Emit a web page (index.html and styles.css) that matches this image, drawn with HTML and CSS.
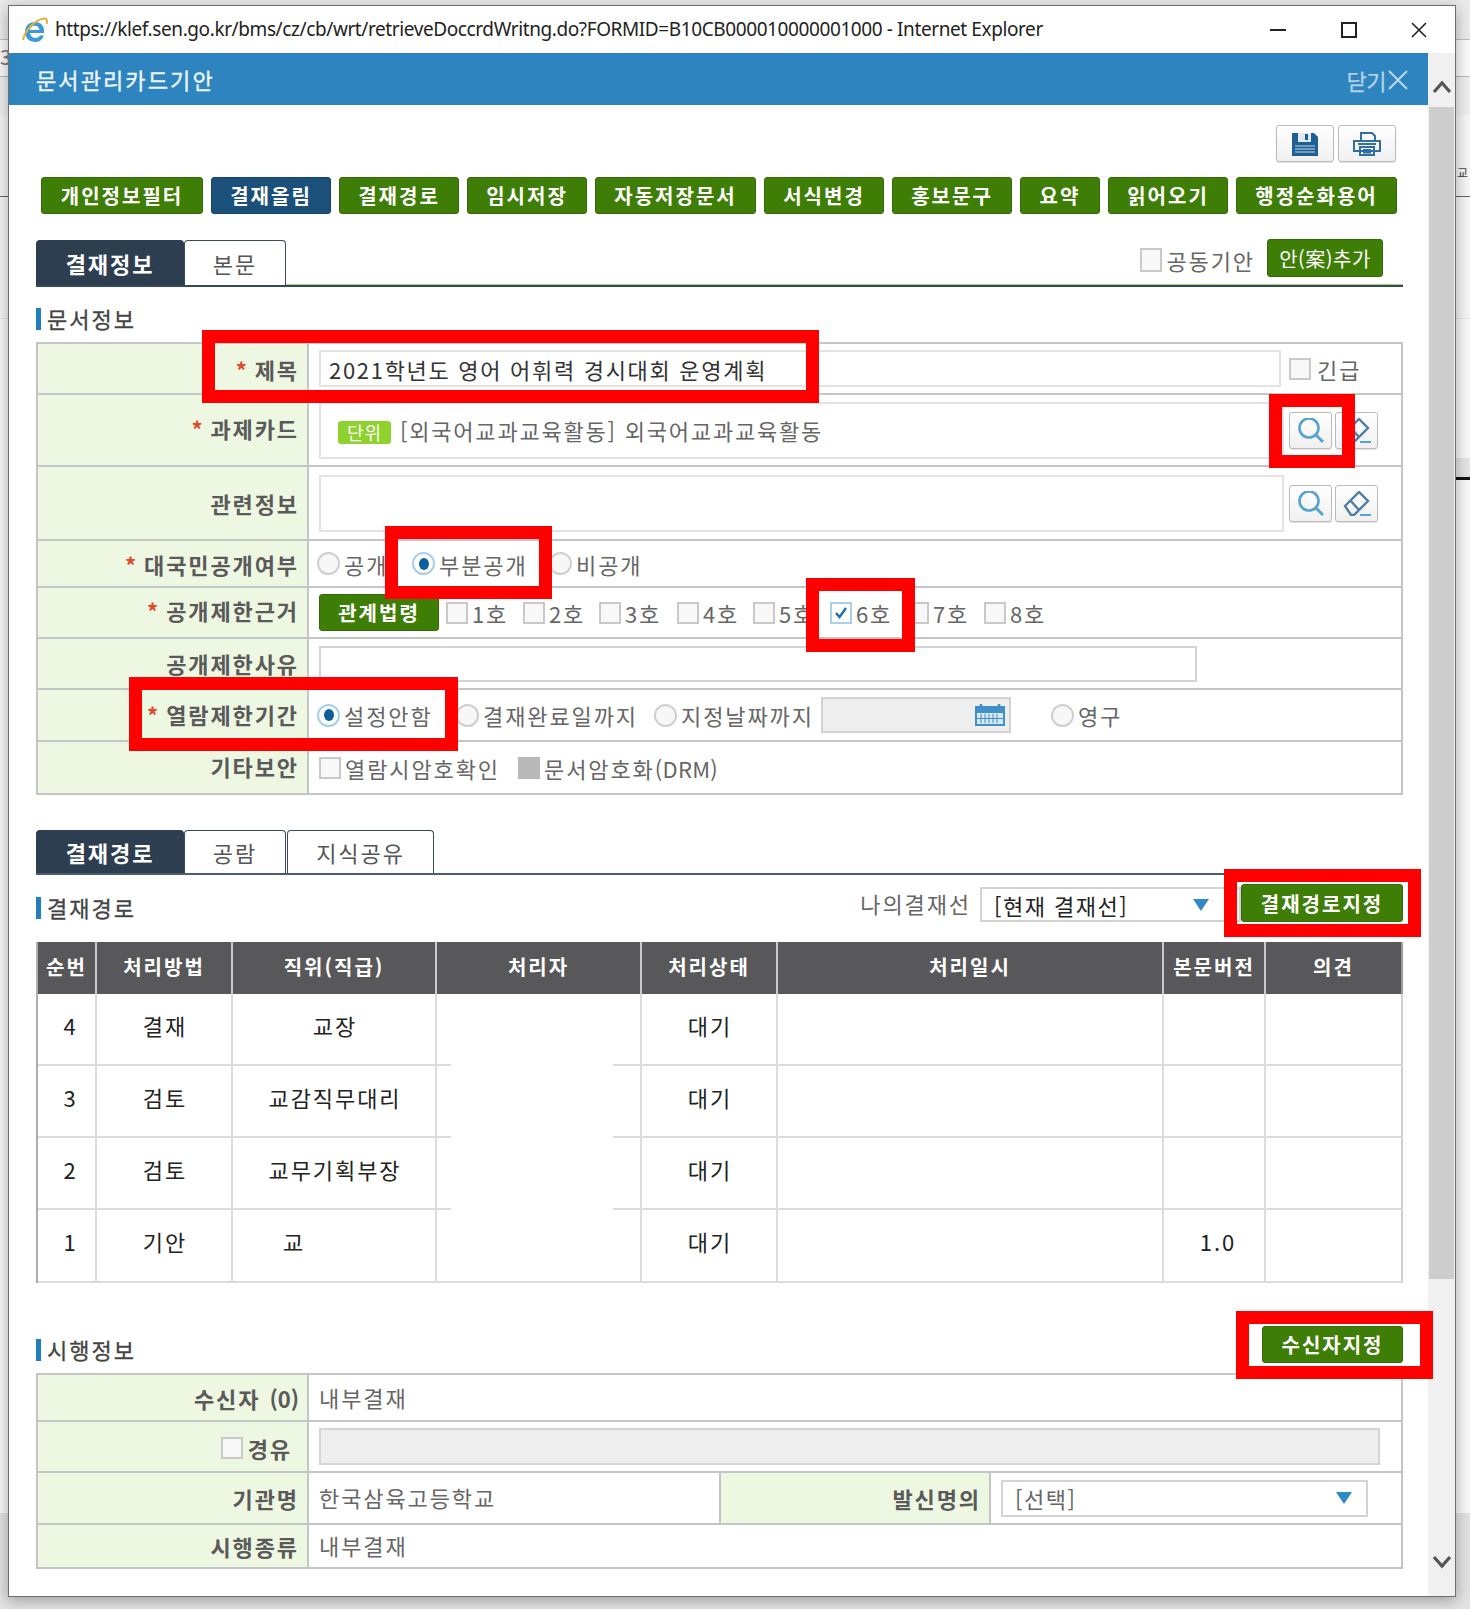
FILE: index.html
```html
<!DOCTYPE html>
<html lang="ko">
<head>
<meta charset="utf-8">
<title>문서관리카드기안</title>
<link rel="stylesheet" href="styles.css">
</head>
<body>
<div class="desktop">
  <span class="behind b-left">3</span>
  <span class="behind b-right">교</span>
  <div class="behind b-band"></div>
  <div class="window">
    <div class="titlebar">
      <svg class="ie" viewBox="0 0 26 26"><path d="M3 15c0-6 4-10 10-10s9 4 9 9v2H8c.5 3 2.500 5 5.500 5 2 0 3.500-1 4.300-2.500h4C20.500 22.500 17.500 25 13.500 25 7.500 25 3 21 3 15zm5-2h9.500c-.3-2.500-2-4.200-4.700-4.200S8.400 10.500 8 13z" fill="#3d9ad9"/><path d="M1 23C3 13 13 3 22 1.500c3-.5 3.500 2 2.500 5.500" fill="none" stroke="#e3b23c" stroke-width="2"/></svg>
      <span class="wintitle">https://klef.sen.go.kr/bms/cz/cb/wrt/retrieveDoccrdWritng.do?FORMID=B10CB000010000001000 - Internet Explorer</span>
      <div class="winctl">
        <svg viewBox="0 0 16 16"><path d="M0 8h16" stroke="#222" stroke-width="2"/></svg>
        <svg viewBox="0 0 16 16"><rect x="1" y="1" width="14" height="14" fill="none" stroke="#222" stroke-width="2"/></svg>
        <svg viewBox="0 0 16 16"><path d="M1 1l14 14M15 1L1 15" stroke="#222" stroke-width="1.600"/></svg>
      </div>
    </div>
    <div class="pane">
      <div class="main">
        <div class="bluehead">
          <span class="bluetitle">문서관리카드기안</span>
          <span class="closelink">닫기<svg viewBox="0 0 20 20"><path d="M1 1l18 18M19 1L1 19" stroke="#b6d4ea" stroke-width="2.200"/></svg></span>
        </div>
        <div class="content">
          <div class="topicons">
            <span class="iconbtn wide"><svg class="i-save" viewBox="0 0 26 24"><path d="M0 1h22l4 4v19H0z" fill="#1e5f94"/><rect x="6" y="1" width="13" height="9" fill="#dfe9f1"/><rect x="13" y="2" width="3" height="6" fill="#1e5f94"/><path d="M3 14h20M3 17h20M3 20h20" stroke="#8fb1cc" stroke-width="1.500"/></svg></span>
            <span class="iconbtn wide"><svg class="i-print" viewBox="0 0 28 24"><path d="M8 8V1h11l3 3v4M1 9h26v10H1zM7 15h14v8H7zM10 18h8M10 20.500h8M5 12h18" fill="none" stroke="#2f6fa3" stroke-width="2"/></svg></span>
          </div>
          <div class="actions">
            <a class="btn w6">개인정보필터</a>
            <a class="btn w4 navy">결재올림</a>
            <a class="btn w4">결재경로</a>
            <a class="btn w4">임시저장</a>
            <a class="btn w6">자동저장문서</a>
            <a class="btn w4">서식변경</a>
            <a class="btn w4">홍보문구</a>
            <a class="btn w2">요약</a>
            <a class="btn w4">읽어오기</a>
            <a class="btn w6">행정순화용어</a>
          </div>
          <div class="tabs green-line">
            <span class="tab on">결재정보</span>
            <span class="tab">본문</span>
            <div class="tabs-right">
              <span class="cb tall"></span><span class="txt joint">공동기안</span>
              <a class="btn addbtn">안(案)추가</a>
            </div>
          </div>
          <h2 class="sec first">문서정보</h2>
          <div class="form">
            <div class="frow h51">
              <div class="lab"><i>*</i>제목</div>
              <div class="val">
                <span class="field title-field">2021학년도 영어 어휘력 경시대회 운영계획</span>
                <span class="cb urgent"></span><span class="txt">긴급</span>
              </div>
            </div>
            <div class="frow h72">
              <div class="lab up4"><i>*</i>과제카드</div>
              <div class="val">
                <span class="field big"><b class="tag">단위</b>[외국어교과교육활동] 외국어교과교육활동</span>
                <span class="iconbtn"><svg class="i-search" viewBox="0 0 26 25"><circle cx="11" cy="10" r="9.500" fill="none" stroke="#56a3d0" stroke-width="2.600"/><path d="M18 17l7 7" stroke="#56a3d0" stroke-width="2.800"/></svg></span>
                <span class="iconbtn"><svg class="i-erase" viewBox="0 0 28 25"><path d="M2 15L16 1l9 9-14 14H8z" fill="none" stroke="#4d7ea3" stroke-width="2.400"/><path d="M7 9l9 10" stroke="#4d7ea3" stroke-width="2.400"/><path d="M17 24h11" stroke="#56a3d0" stroke-width="2"/></svg></span>
              </div>
            </div>
            <div class="frow h74">
              <div class="lab">관련정보</div>
              <div class="val">
                <span class="field big"></span>
                <span class="iconbtn"><svg class="i-search" viewBox="0 0 26 25"><circle cx="11" cy="10" r="9.500" fill="none" stroke="#56a3d0" stroke-width="2.600"/><path d="M18 17l7 7" stroke="#56a3d0" stroke-width="2.800"/></svg></span>
                <span class="iconbtn"><svg class="i-erase" viewBox="0 0 28 25"><path d="M2 15L16 1l9 9-14 14H8z" fill="none" stroke="#4d7ea3" stroke-width="2.400"/><path d="M7 9l9 10" stroke="#4d7ea3" stroke-width="2.400"/><path d="M17 24h11" stroke="#56a3d0" stroke-width="2"/></svg></span>
              </div>
            </div>
            <div class="frow h47">
              <div class="lab"><i>*</i>대국민공개여부</div>
              <div class="val tight">
                <span class="opt o95"><span class="rd"></span><span class="txt">공개</span></span>
                <span class="opt o137"><span class="rd sel"></span><span class="txt">부분공개</span></span>
                <span class="opt"><span class="rd"></span><span class="txt">비공개</span></span>
              </div>
            </div>
            <div class="frow h51">
              <div class="lab up6"><i>*</i>공개제한근거</div>
              <div class="val">
                <a class="btn w4 law">관계법령</a>
                <span class="opt o77"><span class="cb"></span><span class="txt">1호</span></span>
                <span class="opt o76"><span class="cb"></span><span class="txt">2호</span></span>
                <span class="opt o78"><span class="cb"></span><span class="txt">3호</span></span>
                <span class="opt o76"><span class="cb"></span><span class="txt">4호</span></span>
                <span class="opt o77"><span class="cb"></span><span class="txt">5호</span></span>
                <span class="opt o77"><span class="cb chk"><svg viewBox="0 0 14 14"><path d="M2 7l3.500 4L12 2" fill="none" stroke="#1f6fb0" stroke-width="2.400"/></svg></span><span class="txt">6호</span></span>
                <span class="opt o77"><span class="cb"></span><span class="txt">7호</span></span>
                <span class="opt"><span class="cb"></span><span class="txt">8호</span></span>
              </div>
            </div>
            <div class="frow h51">
              <div class="lab up2">공개제한사유</div>
              <div class="val"><span class="field reason"></span></div>
            </div>
            <div class="frow h52">
              <div class="lab up2"><i>*</i>열람제한기간</div>
              <div class="val tight">
                <span class="opt o139"><span class="rd sel"></span><span class="txt">설정안함</span></span>
                <span class="opt o198"><span class="rd"></span><span class="txt">결재완료일까지</span></span>
                <span class="opt o167"><span class="rd"></span><span class="txt">지정날짜까지</span></span>
                <span class="datebox"><svg class="i-cal" viewBox="0 0 30 22"><rect x="0" y="2" width="30" height="20" fill="#3f8fc8"/><rect x="2" y="9" width="26" height="11" fill="#d8e8f3"/><path d="M6 0v5M24 0v5" stroke="#3f8fc8" stroke-width="2.500"/><path d="M6 10v9M10 10v9M14 10v9M18 10v9M22 10v9M2 14.500h26" stroke="#3f8fc8" stroke-width="1"/></svg></span>
                <span class="opt perm"><span class="rd"></span><span class="txt">영구</span></span>
              </div>
            </div>
            <div class="frow h53 last">
              <div class="lab up4">기타보안</div>
              <div class="val">
                <span class="opt o198b"><span class="cb"></span><span class="txt">열람시암호확인</span></span>
                <span class="opt"><span class="cb gray"></span><span class="txt">문서암호화<span class="latin">(DRM)</span></span></span>
              </div>
            </div>
          </div>

          <div class="tabs dark-line second">
            <span class="tab on">결재경로</span>
            <span class="tab">공람</span>
            <span class="tab t3">지식공유</span>
          </div>
          <div class="secrow r1">
            <h2 class="sec">결재경로</h2>
            <div class="secright">
              <span class="txt mine">나의결재선</span>
              <span class="select line-select">[현재 결재선]<svg class="arrow" viewBox="0 0 16 12"><path d="M0 0h16L8 12z" fill="#2f8ac6"/></svg></span>
              <a class="btn routebtn">결재경로지정</a>
            </div>
          </div>
          <table class="route">
            <thead>
              <tr>
                <th class="c1">순번</th><th class="c2">처리방법</th><th class="c3">직위(직급)</th><th class="c4">처리자</th><th class="c5">처리상태</th><th class="c6">처리일시</th><th class="c7">본문버전</th><th class="c8">의견</th>
              </tr>
            </thead>
            <tbody>
              <tr class="r72"><td class="seq">4</td><td>결재</td><td>교장</td><td class="who"></td><td>대기</td><td></td><td></td><td></td></tr>
              <tr class="r72"><td class="seq">3</td><td>검토</td><td>교감직무대리</td><td class="who"></td><td>대기</td><td></td><td></td><td></td></tr>
              <tr class="r72"><td class="seq">2</td><td>검토</td><td>교무기획부장</td><td class="who"></td><td>대기</td><td></td><td></td><td></td></tr>
              <tr class="r73"><td class="seq">1</td><td>기안</td><td class="off">교</td><td></td><td>대기</td><td></td><td class="seq">1.0</td><td></td></tr>
            </tbody>
          </table>
          <div class="secrow r2">
            <h2 class="sec">시행정보</h2>
            <div class="secright"><a class="btn recvbtn">수신자지정</a></div>
          </div>
          <div class="form">
            <div class="frow h48">
              <div class="lab">수신자 <span class="num">(0)</span></div>
              <div class="val plain">내부결재</div>
            </div>
            <div class="frow h51">
              <div class="lab via-lab"><span class="cb via"></span>경유</div>
              <div class="val"><span class="field viafield"></span></div>
            </div>
            <div class="frow h52 split">
              <div class="lab">기관명</div>
              <div class="val plain">한국삼육고등학교</div>
              <div class="lab">발신명의</div>
              <div class="val"><span class="select sender">[선택]<svg class="arrow" viewBox="0 0 16 12"><path d="M0 0h16L8 12z" fill="#2f8ac6"/></svg></span></div>
            </div>
            <div class="frow h44 last">
              <div class="lab">시행종류</div>
              <div class="val plain">내부결재</div>
            </div>
          </div>
        </div>
      </div>
      <div class="scrollbar">
        <svg viewBox="0 0 20 14"><path d="M2 12l8-9 8 9" fill="none" stroke="#555" stroke-width="3.200"/></svg>
        <div class="track"><div class="thumb"></div></div>
        <svg viewBox="0 0 20 14"><path d="M2 2l8 9 8-9" fill="none" stroke="#555" stroke-width="3.200"/></svg>
      </div>
    </div>
  </div>
  <div class="mark m-title"></div>
  <div class="mark m-search"></div>
  <div class="mark m-part"></div>
  <div class="mark m-six"></div>
  <div class="mark m-period"></div>
  <div class="mark m-route"></div>
  <div class="mark m-recv"></div>
</div>
</body>
</html>
```
FILE: styles.css
```css
* { box-sizing: border-box; }
html, body { margin: 0; padding: 0; }
body { font-family: "Noto Sans CJK KR", "Noto Sans", sans-serif; background: #fff; }
.desktop {
  position: relative; width: 1470px; height: 1609px; overflow: hidden;
  background: linear-gradient(to bottom,
    #ebebeb 0 39px, #bdbdbd 39px 40px, #fafafa 40px 76px, #bdbdbd 76px 77px,
    #efefef 77px 115px, #f6f6f6 115px 196px, #666 196px 197px, #f6f6f6 197px 318px,
    #e6e6e6 318px 319px, #f8f8f8 319px 1513px, #e2e2e2 1513px);
}
.behind { position: absolute; }
.b-left { left: 0; top: 45px; font-size: 20px; line-height: 24px; color: #777; }
.b-right { left: 1457px; top: 165px; font-size: 12px; line-height: 16px; color: #444; }
.b-band { left: 1456px; top: 458px; width: 14px; height: 22px; background: #e4e4e4; border-bottom: 3px solid #111; }
.window {
  position: absolute; left: 8px; top: 5px; width: 1448px; height: 1592px;
  background: #fff; border: 1px solid #6e6e6e;
  box-shadow: 0 3px 14px rgba(0,0,0,.32);
}
.titlebar { height: 47px; display: flex; align-items: center; background: #fff; padding-left: 13px; }
.ie { width: 26px; height: 26px; flex: none; }
.wintitle { margin: 0 0 2px 7px; font-family: "Noto Sans", sans-serif; font-size: 19px; letter-spacing: -.4px; color: #222; white-space: nowrap; }
.winctl { margin-left: auto; display: flex; align-items: center; gap: 54.5px; padding-right: 28px; }
.winctl svg { width: 16px; height: 16px; display: block; }
.pane { display: flex; height: 1543px; }
.main { width: 1419px; flex: none; }
.bluehead {
  height: 52px; background: #2d84bf; display: flex; align-items: center; justify-content: space-between;
  padding: 0 20px 0 27px;
}
.bluetitle { color: #eef6fb; font-size: 22px; letter-spacing: 2.100px; -webkit-text-stroke: .35px #eef6fb; }
.closelink { color: #b6d4ea; font-size: 22px; display: flex; align-items: center; letter-spacing: -.5px; padding-top: 1px; -webkit-text-stroke: .25px #b6d4ea; }
.closelink svg { width: 20px; height: 20px; margin-left: 2px; }
.content { padding: 0 25px 0 27px; }
.topicons { display: flex; justify-content: flex-end; gap: 4px; padding: 20px 7px 0 0; }
.iconbtn {
  display: flex; align-items: center; justify-content: center; flex: none;
  width: 43px; height: 37px; border: 1px solid #bbb; border-radius: 3px;
  background: linear-gradient(#fff, #f0f0f0); box-shadow: 0 1px 1px rgba(0,0,0,.12);
}
.i-save { width: 26px; height: 24px; }
.i-print { width: 28px; height: 24px; }
.i-search { width: 26px; height: 25px; }
.i-erase { width: 28px; height: 25px; }
.actions { display: flex; gap: 8px; padding: 15px 0 0 5px; }
.btn {
  display: flex; align-items: center; justify-content: center; flex: none; height: 37px;
  background: #3f7e06; color: #fff; border: 1px solid #36690a; border-radius: 3px;
  font-size: 20px; font-weight: 700; letter-spacing: 2px; white-space: nowrap;
}
.btn.navy { background: #1a5079; border-color: #174566; }
.w6 { width: 161px; }
.actions .btn:first-child { width: 162px; }
.w4 { width: 120px; }
.w2 { width: 80px; }
.tabs { display: flex; height: 47px; position: relative; margin-top: 26px; }
.tabs.green-line { border-bottom: 2px solid #34495a; box-shadow: inset 0 -1px 0 #a6d27a; }
.tabs.dark-line { border-bottom: 2px solid #4d5d6d; height: 45px; margin-top: 35px; }
.tab {
  width: 102px; background: #fff; color: #555; font-size: 22px; letter-spacing: 1.900px;
  display: flex; align-items: center; justify-content: center;
  border: 1px solid #3a4a5a; border-bottom: 0; border-radius: 4px 4px 0 0; position: relative;
  z-index: 1;
}
.tab.on { width: 148px; background: #2c3e50; color: #fff; font-weight: 700; border-color: #2c3e50; }
.tab.t3 { width: 147px; margin-left: 1px; }
.tabs-right { margin-left: auto; display: flex; align-items: center; padding-right: 20px; align-self: flex-start; height: 38px; margin-top: -1px; }
.joint { margin: 4px 12px 0 4px; }
.cb.tall { height: 24px; margin-top: 4px; }
.addbtn { width: 116px; height: 38px; font-size: 20px; font-weight: 400; letter-spacing: .5px; }
.txt { font-size: 22px; letter-spacing: 1.900px; color: #666; white-space: nowrap; }
.latin { letter-spacing: .3px; }
.sec {
  margin: 0; font-size: 22px; font-weight: 400; color: #444; letter-spacing: 2px; line-height: 24px;
  border-left: 5px solid #1f7fc1; padding: 0 0 3px 6px; height: 22px; display: flex; align-items: center;
  -webkit-text-stroke: .3px #444;
}
.sec.first { margin: 21px 0 12px; }
.form { border: solid #c3c5c7; border-width: 2px 2px 0 2px; }
.frow { display: grid; grid-template-columns: 271px 1fr; border-bottom: 2px solid #c3c5c7; }
.frow.split { grid-template-columns: 271px 410px 272px 1fr; }
.frow.split > .lab:nth-child(3) { border-left: 2px solid #c3c5c7; }
.h44 { height: 44px; } .h47 { height: 47px; } .h48 { height: 47px; } .h51 { height: 51px; }
.h52 { height: 52px; } .h53 { height: 53px; } .h72 { height: 72px; } .h74 { height: 74px; }
.lab {
  background: #eef7e1; border-right: 2px solid #c3c5c7; display: flex; align-items: center; justify-content: flex-end;
  padding-right: 8px; font-size: 22px; font-weight: 700; color: #5a5a5a; letter-spacing: 1.900px; white-space: pre;
}
.up2 { padding-bottom: 2px; }
.up4 { padding-bottom: 4px; }
.up6 { padding-bottom: 6px; }
.via-lab { padding: 3px 15px 0 0; }
.num { letter-spacing: 0; margin-left: 1px; }
.lab i { color: #e2492b; font-style: normal; font-size: 22px; margin-right: 6px; }
.val { display: flex; align-items: center; padding-left: 10px; min-width: 0; }
.val.tight { padding-left: 8px; }
.val.plain { font-size: 22px; color: #666; letter-spacing: 1.900px; padding-left: 10px; padding-bottom: 2px; }
.field {
  display: flex; align-items: center; border: 2px solid #e3e3e3; background: #fff; flex: none;
  font-size: 22px; letter-spacing: 1.800px; color: #666;
}
.title-field { width: 962px; height: 37px; padding-left: 8px; color: #333; letter-spacing: 1.700px; }
.urgent { margin-left: 8px; }
.urgent + .txt { margin-left: 6px; }
.big { width: 965px; height: 57px; padding-left: 17px; }
.big + .iconbtn { margin-left: 5px; }
.iconbtn + .iconbtn { margin-left: 3px; }
.topicons .iconbtn.wide { width: 58px; margin: 0; }
.tag {
  display: inline-flex; align-items: center; justify-content: center; width: 53px; height: 23px; margin: 4px 9px 0 0;
  background: #8fd12f; color: #fff; font-size: 18px; font-weight: 400; border-radius: 3px; letter-spacing: 1px;
}
.reason { width: 878px; height: 36px; border-color: #d3d3d3; }
.viafield { width: 1061px; height: 37px; background: #eee; border-color: #d5d5d5; }
.opt { display: flex; align-items: center; gap: 4px; flex: none; }
.o95 { width: 95px; } .o137 { width: 137px; } .o77 { width: 77px; } .o76 { width: 76px; } .o78 { width: 78px; }
.o139 { width: 139px; } .o198 { width: 198px; } .o167 { width: 167px; } .o198b { width: 199px; }
.rd {
  width: 23px; height: 23px; border-radius: 50%; border: 2px solid #cfcfcf; background: #f7f7f7; flex: none; display: flex;
  align-items: center; justify-content: center;
}
.rd.sel { border-color: #a9cfea; background: #fff; }
.rd.sel::after { content: ""; width: 10px; height: 12px; border-radius: 50%; background: #0d5f9e; }
.cb {
  width: 22px; height: 22px; border: 2px solid #c9c9c9; background: #f8f8f8; flex: none; display: flex;
  align-items: center; justify-content: center;
}
.cb svg { width: 14px; height: 14px; }
.cb.chk { border-color: #a9cfea; background: #fff; }
.cb.gray { background: #b8b8b8; border-color: #b8b8b8; }
.cb.via { margin-right: 5px; }
.law { margin-right: 7px; letter-spacing: 2px; }
.datebox {
  width: 190px; height: 36px; background: #eee; border: 2px solid #d3d3d3; display: flex; align-items: center;
  justify-content: flex-end; padding-right: 4px; flex: none;
}
.i-cal { width: 30px; height: 22px; }
.perm { margin-left: 40px; }
.secrow { display: flex; justify-content: space-between; }
.secrow.r1 { margin-top: 9px; height: 38px; }
.secrow.r2 { margin: 43px 0 10px; height: 37px; }
.secrow.r1 .sec { align-self: flex-end; margin-bottom: 3px; }
.secrow.r2 .sec { align-self: flex-end; margin-bottom: 2px; }
.secright { display: flex; align-items: flex-start; }
.mine { margin: 3px 9px 0 0; }
.select {
  display: flex; align-items: center; position: relative; border: 2px solid #d3d3d3; background: #fff; height: 35px;
  font-size: 22px; letter-spacing: 1.500px; color: #222; flex: none;
}
.line-select { width: 261px; margin-top: 3px; padding-left: 12px; }
.routebtn { width: 162px; height: 38px; }
.recvbtn { width: 141px; }
.arrow { position: absolute; width: 16px; height: 12px; top: 10px; }
.line-select .arrow { right: 30px; }
.sender { width: 367px; height: 37px; color: #666; padding-left: 12px; }
.sender .arrow { right: 14px; }
.route { width: 1367px; margin-top: 20px; border-collapse: separate; border-spacing: 0; table-layout: fixed; border-left: 2px solid #aeaeae; }
.route th {
  height: 52px; background: #58585a; color: #fff; font-size: 20px; font-weight: 700; letter-spacing: 2px;
  border-right: 2px solid #c9c9c9; padding: 0 0 4px; white-space: nowrap;
}
.route th:last-child { border-right: 2px solid #9b9b9b; }
.c1 { width: 59px; } .c2 { width: 136px; } .c3 { width: 204px; } .c4 { width: 205px; }
.c5 { width: 136px; } .c6 { width: 386px; } .c7 { width: 102px; } .c8 { width: 137px; }
.route td {
  text-align: center; font-size: 22px; letter-spacing: 1.900px; color: #222; padding: 0 0 9px 2px;
  border-right: 2px solid #dcdcdc; border-bottom: 2px solid #dcdcdc;
}
.route td:last-child { border-right-color: #cfcfcf; }
.route td.seq { padding-left: 8px; }
.r72 td { height: 72px; } .r73 td { height: 73px; }
.route td.who {
  border-bottom: 0;
  background:
    linear-gradient(#dcdcdc, #dcdcdc) left bottom / 14px 2px no-repeat,
    linear-gradient(#dcdcdc, #dcdcdc) right bottom / 27px 2px no-repeat;
}
.route td.off { text-align: left; padding-left: 50px; }
.mark { position: absolute; border: 13px solid #f00; }
.m-title { left: 202px; top: 330px; width: 617px; height: 73px; }
.m-search { left: 1269px; top: 394px; width: 86px; height: 74px; }
.m-part { left: 385px; top: 526px; width: 167px; height: 73px; }
.m-six { left: 806px; top: 578px; width: 109px; height: 74px; }
.m-period { left: 129px; top: 677px; width: 329px; height: 74px; }
.m-route { left: 1224px; top: 869px; width: 197px; height: 68px; }
.m-recv { left: 1236px; top: 1311px; width: 197px; height: 68px; }
.scrollbar { width: 27px; background: #f0f0f0; display: flex; flex-direction: column; align-items: center; flex: none; }
.scrollbar svg { width: 20px; height: 14px; flex: none; margin: 27px 0 13px; }
.scrollbar svg:last-child { margin: 8px 0 0; }
.track { flex: none; width: 100%; height: 1440px; padding: 0 1px; }
.thumb { height: 1172px; background: #cdcdcd; }
```
